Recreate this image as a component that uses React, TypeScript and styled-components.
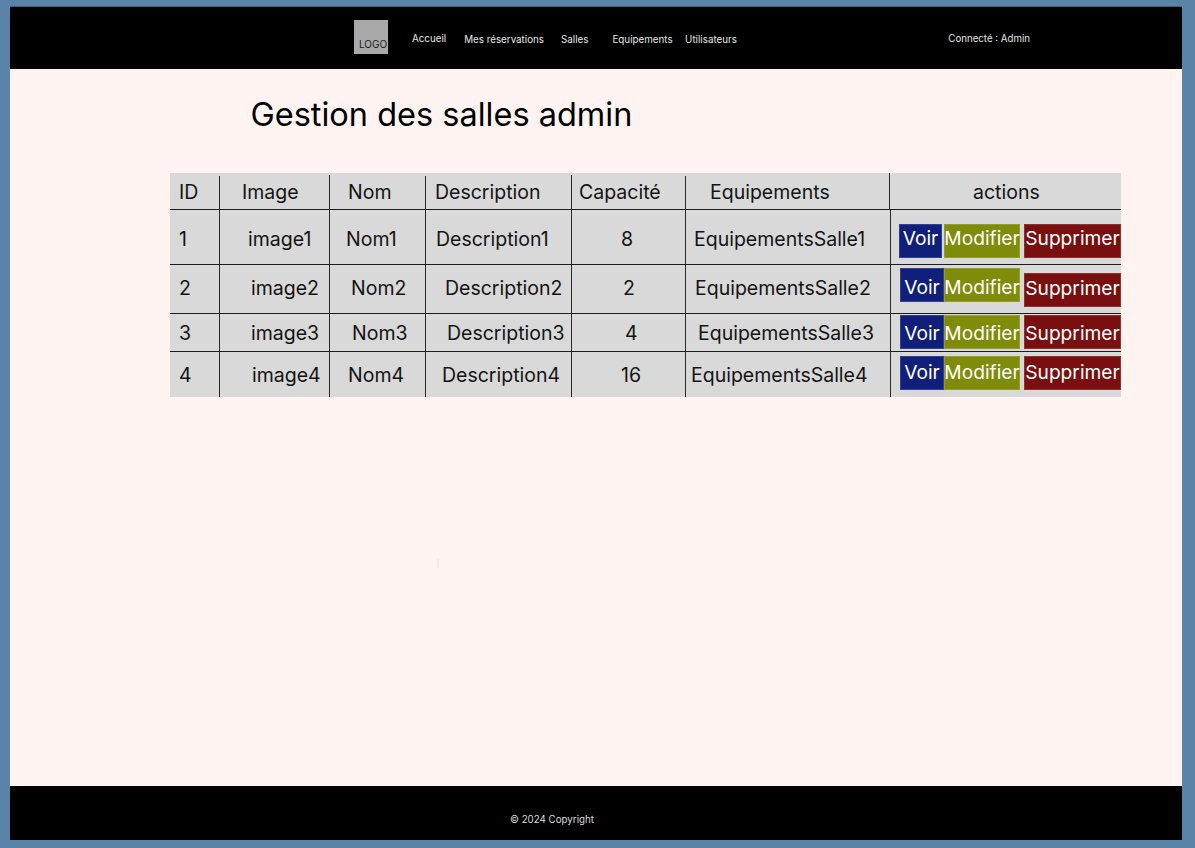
import React from "react";
import styled, { createGlobalStyle } from "styled-components";

const Global = createGlobalStyle`
  html, body { margin: 0; padding: 0; background: #5a83a8; }
  body { font-family: Inter, "Liberation Sans", sans-serif; color: #000; }
`;
const Frame = styled.div`
  width: 1195px; height: 848px; box-sizing: border-box;
  padding: 7px 13px 8px 10px; display: flex; overflow: hidden;
`;
const Shell = styled.div`
  flex: 1; display: flex; flex-direction: column;
  box-shadow: 0 -1px 0 0 rgba(30, 60, 90, 0.5);
`;
const Header = styled.header`
  height: 62px; background: #000; display: flex; align-items: center;
  padding-left: 344px; flex: none;
`;
const Logo = styled.div`
  width: 34px; height: 34px; background: #a9a9a9; color: #1a1a1a;
  font-size: 10px; line-height: 12px; box-sizing: border-box;
  padding: 18px 0 0 5px; align-self: flex-start; margin: 13px 8px 0 0;
  white-space: nowrap;
`;
const NavItem = styled.a<{ $left: number; $top?: number; $size?: number }>`
  color: #e6e6e6; font-size: ${(p) => p.$size ?? 9.8}px; line-height: 12px; white-space: nowrap;
  margin-left: ${(p) => p.$left}px;
  margin-top: ${(p) => p.$top ?? 4}px;
`;
const Main = styled.main`
  flex: 1; background: #fff4f2; padding: 27px 61px 0 160px;
  display: flex; flex-direction: column;
`;
const Title = styled.h1`
  margin: 0 0 39px 80.5px; font-size: 32.5px; line-height: 38px; font-weight: 400;
  white-space: nowrap;
`;
const Table = styled.div`
  width: 951px; background: #d9d9d9; font-size: 19.5px; flex: none;
`;
const Row = styled.div<{ $h: number; $cols: string; $line: boolean }>`
  height: ${(p) => p.$h}px; display: grid; grid-template-columns: ${(p) => p.$cols};
  box-sizing: border-box;
  border-bottom: ${(p) => (p.$line ? "1px solid #1c1c1c" : "none")};
`;
const Cell = styled.div<{ $pad: number; $lift?: number; $drop?: number; $notch?: number }>`
  position: relative;
  display: flex; align-items: center; white-space: nowrap; color: #141414;
  padding-left: ${(p) => p.$pad}px;
  padding-bottom: ${(p) => p.$lift ?? 0}px;
  padding-top: ${(p) => p.$drop ?? 0}px;
  border-right: 1px solid #2a2a2a;
  box-sizing: border-box;
  &:last-child { border-right: none; }
  &::before {
    content: ""; position: absolute; top: 0; right: -1px; width: 1px;
    height: ${(p) => p.$notch ?? 0}px; background: #d9d9d9;
  }
`;
const Actions = styled.div<{ $pad: number }>`
  display: flex; align-items: flex-start; padding-left: ${(p) => p.$pad}px;
`;
const Btn = styled.div<{ $bg: string; $w: number; $top: number; $gap?: number; $dy: number }>`
  width: ${(p) => p.$w}px; height: 34px; margin-top: ${(p) => p.$top}px;
  margin-left: ${(p) => p.$gap ?? 0}px; background: ${(p) => p.$bg};
  color: #fff; display: flex; align-items: center; justify-content: center;
  font-size: 19.2px; flex: none; overflow: hidden; white-space: nowrap;
  box-sizing: border-box; box-shadow: inset 0 0 0 1px rgba(255, 255, 255, 0.15);
  padding-top: ${(p) => Math.max(p.$dy, 0) * 2}px;
  padding-bottom: ${(p) => Math.max(-p.$dy, 0) * 2}px;
`;
const Mark = styled.div`
  width: 2px; height: 9px; background: #ececec; margin: 162px 0 0 267px; flex: none;
`;
const Footer = styled.footer`
  height: 54px; background: #000; flex: none; display: flex; align-items: center;
  padding-left: 500px; color: #dedede; font-size: 9.75px; box-sizing: border-box;
  padding-top: 12px;
`;

const headerCols = "50px 110px 96px 146px 114px 204px 1fr";
const bodyCols = "50px 110px 96px 146px 114px 205px 1fr";
const headers: [string, number, number][] = [
  ["ID", 9, 3], ["Image", 22, 2], ["Nom", 18, 3], ["Description", 9, 2], ["Capacité", 7, 3], ["Equipements", 24, 0], ["actions", 83, 0],
];
type RowData = {
  h: number; lift?: number; drop?: number; pads: number[]; cells: string[];
  voirPad: number; voirW: number; modGap: number; top: number; delTop: number; dy: number; delDy: number;
};
const rows: RowData[] = [
  { h: 55, drop: 3, pads: [9, 28, 16, 10, 49, 8], cells: ["1", "image1", "Nom1", "Description1", "8", "EquipementsSalle1"], voirPad: 8, voirW: 43, modGap: 2, top: 14, delTop: 14, dy: -3, delDy: -3 },
  { h: 49, lift: 3, pads: [9, 31, 21, 19, 51, 9], cells: ["2", "image2", "Nom2", "Description2", "2", "EquipementsSalle2"], voirPad: 9, voirW: 44, modGap: 0, top: 3, delTop: 8, dy: 2, delDy: -2 },
  { h: 38, pads: [9, 31, 22, 21, 53, 12], cells: ["3", "image3", "Nom3", "Description3", "4", "EquipementsSalle3"], voirPad: 9, voirW: 44, modGap: 0, top: 1, delTop: 1, dy: 1, delDy: 1 },
  { h: 45, pads: [9, 32, 18, 16, 49, 5], cells: ["4", "image4", "Nom4", "Description4", "16", "EquipementsSalle4"], voirPad: 9, voirW: 44, modGap: 0, top: 4, delTop: 4, dy: -1, delDy: -1 },
];

export default function App() {
  return (
    <Frame>
      <Global />
      <Shell>
        <Header>
          <Logo>LOGO</Logo>
          <NavItem $left={16} $top={1}>Accueil</NavItem>
          <NavItem $left={18}>Mes réservations</NavItem>
          <NavItem $left={17}>Salles</NavItem>
          <NavItem $left={24}>Equipements</NavItem>
          <NavItem $left={12.5}>Utilisateurs</NavItem>
          <NavItem $left={211.5} $top={2} $size={9.7}>Connecté : Admin</NavItem>
        </Header>
        <Main>
          <Title>Gestion des salles admin</Title>
          <Table>
            <Row $h={37} $cols={headerCols} $line>
              {headers.map(([t, pad, notch]) => (
                <Cell key={t} $pad={pad} $notch={notch} $drop={1}>{t}</Cell>
              ))}
            </Row>
            {rows.map((r, i) => (
              <Row key={r.cells[0]} $h={r.h} $cols={bodyCols} $line={i < rows.length - 1}>
                {r.cells.map((c, j) => (
                  <Cell key={j} $pad={r.pads[j]} $lift={r.lift} $drop={r.drop}>{c}</Cell>
                ))}
                <Actions $pad={r.voirPad}>
                  <Btn $bg="#0f1f7a" $w={r.voirW} $top={r.top} $dy={r.dy}>Voir</Btn>
                  <Btn $bg="#7f8c0a" $w={76} $top={r.top} $gap={r.modGap} $dy={r.dy}>Modifier</Btn>
                  <Btn $bg="#7a0f0f" $w={97} $top={r.delTop} $gap={4} $dy={r.delDy}>Supprimer</Btn>
                </Actions>
              </Row>
            ))}
          </Table>
          <Mark />
        </Main>
        <Footer>© 2024 Copyright</Footer>
      </Shell>
    </Frame>
  );
}
